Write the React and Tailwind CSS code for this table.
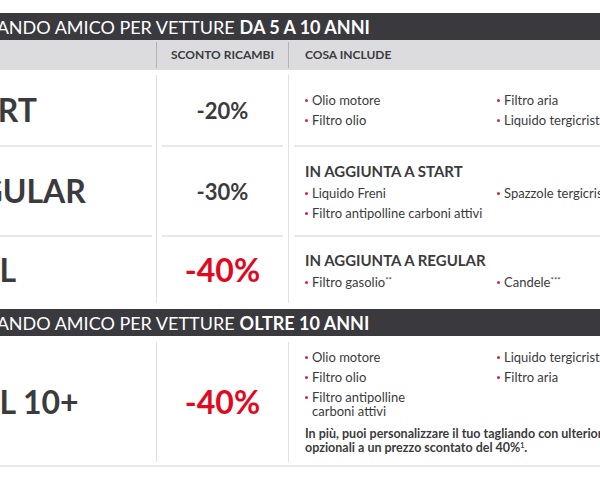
import React from 'react';

const Bar = ({ light, bold }) => (
  <div className="h-[27px] bg-[#3a393e] flex items-center pl-[12px] text-[18px] leading-none text-white whitespace-nowrap">
    <span>{light}</span>
    <span className="font-bold ml-[5px]">{bold}</span>
  </div>
);

const Item = ({ children }) => (
  <div className="flex items-start text-[13px] leading-[14px] text-[#3b3b3d]">
    <span className="w-[3px] h-[3px] rounded-full bg-[#d3214b] mt-[6px] mr-[4px] shrink-0" />
    <span>{children}</span>
  </div>
);

const Heading = ({ children }) => (
  <div className="text-[15px] leading-[18px] font-bold text-[#3b3b3d] mb-[6px]">{children}</div>
);

const Row = ({ name, discount, red, height, line = true, children }) => (
  <div className={`flex ${height}`}>
    <div className="w-[221px] border-r border-[#e1e1e3] flex flex-col">
      <div className="flex-1 flex items-center pl-[5px] text-[32px] font-bold text-[#3b3b3d] whitespace-nowrap">{name}</div>
      {line && <div className="h-[2px] bg-[#e8e8ea] mr-[4px]" />}
    </div>
    <div className="w-[132px] border-r border-[#e1e1e3] flex flex-col">
      <div className={`flex-1 flex items-center justify-center font-bold ${red ? 'text-[32px] text-[#e2091f]' : 'text-[22px] text-[#3b3b3d]'}`}>
        {discount}
      </div>
      {line && <div className="h-[2px] bg-[#e8e8ea] mx-[5px]" />}
    </div>
    <div className="flex-1 flex flex-col">
      <div className="flex-1 flex flex-col justify-center pl-[16px]">{children}</div>
      {line && <div className="h-[2px] bg-[#e8e8ea] ml-[5px]" />}
    </div>
  </div>
);

const Grid = ({ children }) => (
  <div className="grid grid-cols-[192px_192px] gap-y-[6px]">{children}</div>
);

export default function App() {
  return (
    <div className="w-[600px] h-[480px] overflow-hidden bg-white font-['Lato','Noto_Sans',sans-serif]">
      <div className="ml-[-64px] w-[780px] pt-[13px]">
        <Bar light="TAGLIANDO AMICO PER VETTURE" bold="DA 5 A 10 ANNI" />

        {/* intestazione */}
        <div className="h-[30px] bg-[#dcdcdf] flex py-[2px] text-[12px] font-bold text-[#3b3b3d]">
          <div className="w-[221px] border-r border-[#b4b4b8]" />
          <div className="w-[132px] border-r border-[#b4b4b8] flex items-center justify-center">SCONTO RICAMBI</div>
          <div className="flex-1 flex items-center pl-[16px]">COSA INCLUDE</div>
        </div>
        <div className="h-[5px]" />

        <Row name="START" discount="-20%" height="h-[72px]">
          <Grid>
            <Item>Olio motore</Item>
            <Item>Filtro aria</Item>
            <Item>Filtro olio</Item>
            <Item>Liquido tergicristallo</Item>
          </Grid>
        </Row>

        <Row name="REGULAR" discount="-30%" height="h-[90px]">
          <Heading>IN AGGIUNTA A START</Heading>
          <Grid>
            <Item>Liquido Freni</Item>
            <Item>Spazzole tergicristallo</Item>
            <Item>Filtro antipolline carboni attivi</Item>
          </Grid>
        </Row>

        <Row name="FULL" discount="-40%" red height="h-[66px]" line={false}>
          <Heading>IN AGGIUNTA A REGULAR</Heading>
          <Grid>
            <Item>Filtro gasolio<sup className="text-[8px]">**</sup></Item>
            <Item>Candele<sup className="text-[8px]">***</sup></Item>
          </Grid>
        </Row>
        <div className="h-[6px]" />

        <Bar light="TAGLIANDO AMICO PER VETTURE" bold="OLTRE 10 ANNI" />
        <div className="h-[6px]" />

        <Row name="FULL 10+" discount="-40%" red height="h-[120px]" line={false}>
          <Grid>
            <Item>Olio motore</Item>
            <Item>Liquido tergicristallo</Item>
            <Item>Filtro olio</Item>
            <Item>Filtro aria</Item>
            <Item>Filtro antipolline<br />carboni attivi</Item>
          </Grid>
          <p className="mt-[9px] text-[12.5px] leading-[14px] font-bold text-[#3b3b3d] whitespace-nowrap">
            In più, puoi personalizzare il tuo tagliando con ulteriori interventi<br />
            opzionali a un prezzo scontato del 40%<sup className="text-[7px]">1</sup>.
          </p>
        </Row>
        <div className="h-[5px] border-b-2 border-[#e8e8ea]" />
      </div>
    </div>
  );
}
